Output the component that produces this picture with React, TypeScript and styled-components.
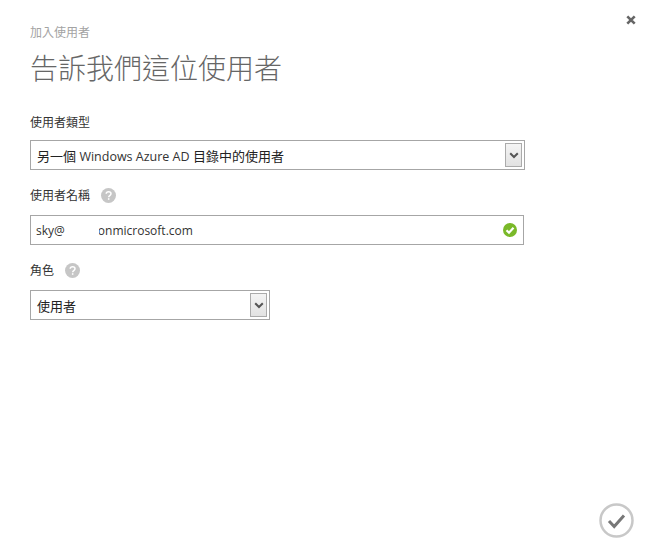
import React from "react";
import styled, { createGlobalStyle } from "styled-components";

const Global = createGlobalStyle`
  html, body { margin: 0; padding: 0; background: #fff; }
  body { font-family: "Open Sans", "Noto Sans CJK TC", sans-serif; }
`;

const Page = styled.div`
  position: relative;
  width: 650px;
  height: 560px;
  box-sizing: border-box;
  padding: 24px 0 0 30px;
  background: #fff;
  overflow: hidden;
`;

const Subtitle = styled.div`
  font-size: 12px;
  line-height: 17px;
  color: #a3a3a3;
`;

const Title = styled.h1`
  margin: 7px 0 0;
  font-size: 28px;
  line-height: 40px;
  font-weight: 300;
  color: #666;
`;

const Field = styled.div<{ $top: number }>`
  margin-top: ${(p) => p.$top}px;
`;

const Label = styled.div`
  display: flex;
  align-items: center;
  gap: 11px;
  height: 18px;
  font-size: 12px;
  color: #333;
`;

const Control = styled.div<{ $width: number; $gap: number }>`
  position: relative;
  display: flex;
  align-items: center;
  justify-content: space-between;
  box-sizing: border-box;
  width: ${(p) => p.$width}px;
  height: 30px;
  margin-top: ${(p) => p.$gap}px;
  padding: 0 2px 0 6px;
  border: 1px solid #a6a6a6;
  font-size: 13px;
  color: #222;
  white-space: pre;
`;

const Latin = styled.span`
  font-size: 12.5px;
  color: #333;
`;

const InputText = styled.span`
  margin-left: -1px;
  font-size: 12px;
  color: #333;
`;

const Spacer = styled.span`
  display: inline-block;
  width: 33px;
`;

const Mask = styled.span`
  position: absolute;
  left: 35px;
  top: 2px;
  width: 33px;
  height: 24px;
  background: #fff;
`;

const ArrowBox = styled.span`
  display: flex;
  align-items: center;
  justify-content: center;
  box-sizing: border-box;
  width: 17px;
  height: 24px;
  border: 1px solid #ababab;
  background: linear-gradient(#f4f4f4, #e2e2e2);
`;

const StatusIcon = styled.svg`
  margin-right: 4px;
`;

const Close = styled.svg`
  position: absolute;
  left: 626px;
  top: 15px;
`;

const Confirm = styled.svg`
  position: absolute;
  left: 599px;
  top: 503px;
`;

const Help = () => (
  <svg width="15" height="15" viewBox="0 0 15 15">
    <circle cx="7.5" cy="7.5" r="7.5" fill="#c6c6c6" />
    <path d="M5.2 5.8c.1-1.4 1.1-2.1 2.4-2.1s2.4.7 2.4 2c0 1.900-2.300 1.800-2.300 3.500" fill="none" stroke="#fff" strokeWidth="1.500" />
    <rect x="6.900" y="10.200" width="1.500" height="1.600" fill="#fff" />
  </svg>
);

const Chevron = () => (
  <svg width="10" height="7" viewBox="0 0 10 7">
    <path d="M1.200 1.200 5 5 8.800 1.200" fill="none" stroke="#555" strokeWidth="2" />
  </svg>
);

export default function App() {
  return (
    <Page>
      <Global />
      <Subtitle>加入使用者</Subtitle>
      <Title>告訴我們這位使用者</Title>

      <Field $top={25}>
        <Label>使用者類型</Label>
        <Control $width={495} $gap={9}>
          <span>另一個 <Latin>Windows Azure AD</Latin> 目錄中的使用者</span>
          <ArrowBox><Chevron /></ArrowBox>
        </Control>
      </Field>

      <Field $top={16}>
        <Label>使用者名稱 <Help /></Label>
        <Control $width={494} $gap={11}>
          <InputText>sky@<Spacer />onmicrosoft.com</InputText>
          <Mask />
          <StatusIcon width="14" height="14" viewBox="0 0 14 14">
            <circle cx="7" cy="7" r="7" fill="#7ab929" />
            <path d="M3.500 7.200 6 9.700 10.500 4.800" fill="none" stroke="#fff" strokeWidth="2.200" />
          </StatusIcon>
        </Control>
      </Field>

      <Field $top={16}>
        <Label>角色 <Help /></Label>
        <Control $width={240} $gap={11}>
          <span>使用者</span>
          <ArrowBox><Chevron /></ArrowBox>
        </Control>
      </Field>

      <Close width="10" height="10" viewBox="0 0 10 10">
        <path d="M1.300 1.300 8.700 8.700M8.700 1.300 1.300 8.700" stroke="#666" strokeWidth="2.600" />
      </Close>

      <Confirm width="35" height="35" viewBox="0 0 35 35">
        <circle cx="17.500" cy="17.500" r="16" fill="none" stroke="#c8c8c8" strokeWidth="2.500" />
        <path d="M10 18 15.200 23.500 25 12.500" fill="none" stroke="#777" strokeWidth="3" />
      </Confirm>
    </Page>
  );
}
